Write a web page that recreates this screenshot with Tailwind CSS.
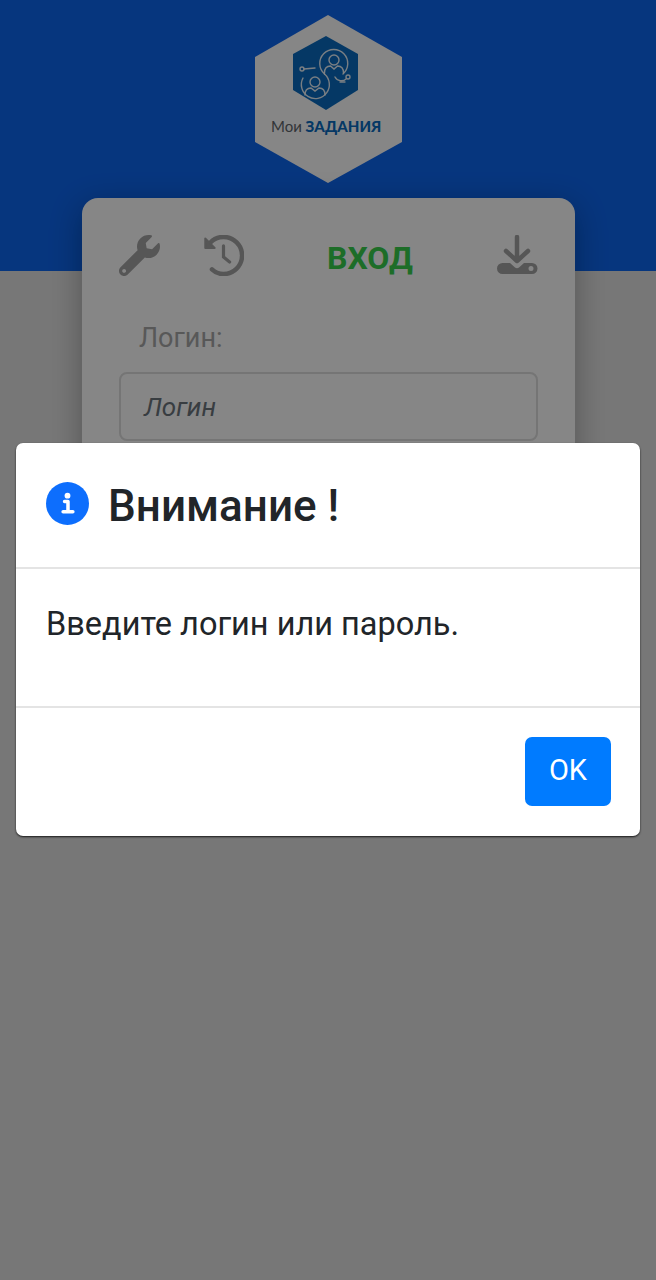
<!DOCTYPE html>
<html lang="ru">
<head>
    <meta charset="UTF-8">
    <meta name="viewport" content="width=device-width, initial-scale=1.0">
    <title>Мои задания - Вход</title>
    <script src="https://cdn.jsdelivr.net/npm/@tailwindcss/browser@4"></script>
</head>
<body class="bg-[#e3e3e3] font-['Roboto',sans-serif]">
    <div class="relative h-[1280px] overflow-hidden">
        <!-- Header with logo -->
        <div class="h-[271px] bg-[#0d67f0] pt-[15px] pl-[255px]">
            <svg class="block w-[147px] h-[168px]" viewBox="0 0 147 168">
                <polygon points="73,0 147,42 147,127 73,168 0,127 0,42" fill="#ffffff"/>
                <polygon points="71,21 103,39 103,75 71,95 38,75 38,39" fill="#0a6cc0"/>
                <g fill="none" stroke="#ffffff" stroke-opacity="0.9" stroke-width="1.400" stroke-linecap="round">
                    <!-- upper ring -->
                    <path d="M69.500 59A14 14 0 1 1 88 59"/>
                    <circle cx="79" cy="45" r="5"/>
                    <path d="M69.500 58c0-5 3-7 6-7l3.500 3 3.500-3c3 0 6 2 6 7"/>
                    <!-- lower ring -->
                    <path d="M69.500 59A14 14 0 1 1 48 63"/>
                    <circle cx="60" cy="67" r="5"/>
                    <path d="M50 80c0-5 3-7 6-7l4 3 4-3c3 0 6 2 6 7"/>
                    <!-- little nodes -->
                    <circle cx="47" cy="54" r="2"/>
                    <path d="M49 54l11-1"/>
                    <path d="M80 62c2 4 8 5 11 2"/>
                    <circle cx="93" cy="62" r="2"/>
                    <path d="M85 67h5"/>
                </g>
                <text x="16" y="117" font-family="Lato, sans-serif" font-size="15" fill="#60666c">Мои</text>
                <text x="50.500" y="117" font-family="Lato, sans-serif" font-size="15" font-weight="900" fill="#0a6cc0">ЗАДАНИЯ</text>
            </svg>
        </div>

        <!-- Login card -->
        <div class="ml-[82px] w-[493px] -mt-[73px] h-[540px] bg-white rounded-[16px] shadow-[0_8px_32px_rgba(0,0,0,0.3)] pt-[35px] px-[37px] relative">
            <div class="flex items-center h-[44px]">
                <svg class="w-[41px] h-[41px] text-[#a4a4a4]" viewBox="0 0 512 512" fill="currentColor"><path d="M507.730 109.100c-2.240-9.030-13.540-12.090-20.120-5.510l-74.360 74.360-67.880-11.310-11.310-67.880 74.360-74.360c6.620-6.620 3.430-17.900-5.660-20.160-47.380-11.740-99.550.91-136.580 37.930-39.640 39.640-50.550 97.100-34.050 147.200L18.740 402.760c-24.990 24.990-24.990 65.510 0 90.500 24.990 24.990 65.510 24.990 90.500 0l213.210-213.210c50.120 16.710 107.470 5.680 147.370-34.220 37.070-37.070 49.700-89.320 37.910-136.730zM64 472c-13.250 0-24-10.750-24-24 0-13.260 10.750-24 24-24s24 10.740 24 24c0 13.250-10.750 24-24 24z"/></svg>
                <svg class="ml-[43px] w-[41px] h-[41px] text-[#a4a4a4]" viewBox="0 0 512 512" fill="none" stroke="currentColor" stroke-width="56" stroke-linecap="round"><path d="M112 430c38 38 90 58 144 58 128 0 232-104 232-232S384 24 256 24c-66 0-124 28-166 72"/><path d="M256 136v140l76 62" stroke-width="40"/><path d="M28 44v118h118z" fill="currentColor" stroke-width="24" stroke-linejoin="round"/></svg>
                <div class="ml-[83px] w-[88px] text-[32px] font-bold text-[#38d04c] leading-none pt-[5px]">ВХОД</div>
                <svg class="ml-auto w-[41px] h-[41px] text-[#a4a4a4]" viewBox="0 0 41 41" fill="currentColor"><path fill-rule="evenodd" d="M5.500 28H13l5 4.500c1.200 1 2.800 1 4 0l5-4.500h8a5.500 5.500 0 0 1 0 11H5.500a5.500 5.500 0 0 1 0-11zM34 31a2.500 2.500 0 1 0 0 5 2.500 2.500 0 0 0 0-5z"/><path d="M20 2v24M9 16l11 10 11-10" fill="none" stroke="currentColor" stroke-width="4.500" stroke-linecap="round" stroke-linejoin="round"/></svg>
            </div>
            <div class="mt-[43px] ml-[20px] text-[27px] leading-[36px] text-[#a8a8a8]">Логин:</div>
            <div class="mt-[16px] h-[69px] border-2 border-[#dedede] rounded-[8px] flex items-center px-[23px] pt-[2px] text-[26px] italic text-[#6c757d]">Логин</div>
            <div class="mt-[32px] ml-[20px] text-[27px] leading-[36px] text-[#a8a8a8]">Пароль:</div>
            <div class="mt-[17px] h-[69px] border-2 border-[#dedede] rounded-[8px]"></div>
        </div>

        <!-- Dim overlay + alert -->
        <div class="absolute inset-0 bg-black/[0.475]"></div>
        <div class="absolute left-[16px] top-[443px] w-[624px] h-[393px] bg-white rounded-[7px] shadow-[0_1px_2px_rgba(0,0,0,0.8)] flex flex-col">
            <div class="h-[126px] flex items-center pl-[30px] pb-[3px] border-b-2 border-[#e4e4e4]">
                <svg class="w-[43px] h-[43px] text-[#0d6efd]" viewBox="0 0 44 44"><circle cx="22" cy="22" r="22" fill="currentColor"/><circle cx="22" cy="14" r="3" fill="#ffffff"/><path d="M19 20h3.500v10M17.500 30.500h10" fill="none" stroke="#ffffff" stroke-width="3.600" stroke-linecap="round" stroke-linejoin="round"/></svg>
                <div class="ml-[19px] pt-[5px] text-[44px] font-medium text-[#212529] leading-none">Внимание !</div>
            </div>
            <div class="h-[139px] pl-[30px] pt-[35px] border-b-2 border-[#e4e4e4] text-[32.500px] leading-[40px] text-[#212529]">Введите логин или пароль.</div>
            <div class="flex-1 flex items-center justify-end pr-[29px] pb-[2px]">
                <button class="w-[86px] h-[69px] bg-[#007bff] rounded-[7px] text-white text-[29px]">OK</button>
            </div>
        </div>
    </div>
</body>
</html>
